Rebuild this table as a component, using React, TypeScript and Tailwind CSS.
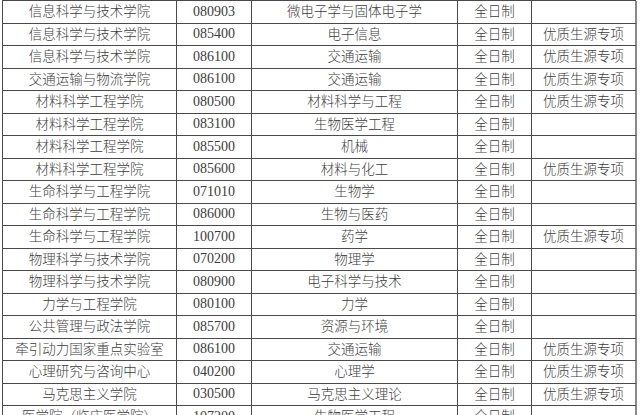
import React from 'react';

/** One row of the enrolment table. */
type Row = [string, string, string, string, string];

const rows: Row[] = [
  ['信息科学与技术学院', '080903', '微电子学与固体电子学', '全日制', ''],
  ['信息科学与技术学院', '085400', '电子信息', '全日制', '优质生源专项'],
  ['信息科学与技术学院', '086100', '交通运输', '全日制', '优质生源专项'],
  ['交通运输与物流学院', '086100', '交通运输', '全日制', '优质生源专项'],
  ['材料科学工程学院', '080500', '材料科学与工程', '全日制', '优质生源专项'],
  ['材料科学工程学院', '083100', '生物医学工程', '全日制', ''],
  ['材料科学工程学院', '085500', '机械', '全日制', ''],
  ['材料科学工程学院', '085600', '材料与化工', '全日制', '优质生源专项'],
  ['生命科学与工程学院', '071010', '生物学', '全日制', ''],
  ['生命科学与工程学院', '086000', '生物与医药', '全日制', ''],
  ['生命科学与工程学院', '100700', '药学', '全日制', '优质生源专项'],
  ['物理科学与技术学院', '070200', '物理学', '全日制', ''],
  ['物理科学与技术学院', '080900', '电子科学与技术', '全日制', ''],
  ['力学与工程学院', '080100', '力学', '全日制', ''],
  ['公共管理与政法学院', '085700', '资源与环境', '全日制', ''],
  ['牵引动力国家重点实验室', '086100', '交通运输', '全日制', '优质生源专项'],
  ['心理研究与咨询中心', '040200', '心理学', '全日制', '优质生源专项'],
  ['马克思主义学院', '030500', '马克思主义理论', '全日制', '优质生源专项'],
  ['医学院（临床医学院）', '107200', '生物医学工程', '全日制', ''],
];

export default function App() {
  return (
    <div className="h-[415px] w-[640px] overflow-hidden bg-white font-['Liberation_Serif','Noto_Sans_CJK_SC',serif] text-[13.5px] font-light text-[#3c3c3c]">
      {/* Table grid: five fixed columns, rows of 22.5px */}
      <div className="ml-[2px] grid w-[634px] grid-cols-[174px_75px_206px_74px_105px] auto-rows-[22.5px] border-l border-t border-[#4a4a4a]">
        {rows.map((row, i) =>
          row.map((cell, j) => (
            <div
              key={`${i}-${j}`}
              className={
                'flex items-center justify-center whitespace-nowrap border-b border-[#4a4a4a] leading-none ' +
                (j === 4 ? 'border-r-2 border-r-[#8a8a8a]' : 'border-r border-r-[#4a4a4a]') +
                (j === 1 ? ' text-[14px]' : '')
              }
            >
              {cell}
            </div>
          ))
        )}
      </div>
    </div>
  );
}
